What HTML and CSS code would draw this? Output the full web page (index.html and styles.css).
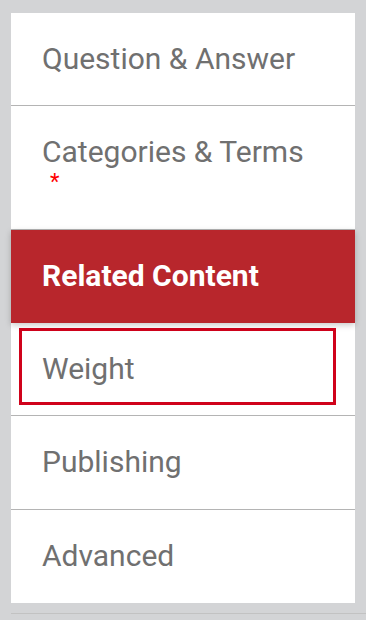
FILE: index.html
```html
<!DOCTYPE html>
<html lang="en">
<head>
<meta charset="utf-8">
<title>Sections</title>
<link rel="stylesheet" href="styles.css">
</head>
<body>
<nav class="panel">
  <div class="item">Question &amp; Answer</div>
  <div class="item">Categories &amp; Terms<span class="req">*</span></div>
  <div class="item active">Related Content</div>
  <div class="item focused">Weight</div>
  <div class="item tall">Publishing</div>
  <div class="item last">Advanced</div>
</nav>
<div class="next"></div>
</body>
</html>
```
FILE: styles.css
```css
html, body {
  margin: 0;
  padding: 0;
}
body {
  background: #d3d4d6;
  padding-top: 13px;
  font-family: Roboto, "Liberation Sans", Arial, sans-serif;
}
.panel {
  margin: 0 11px;
  background: #ffffff;
  display: flex;
  flex-direction: column;
}
.item {
  position: relative;
  padding: 28px 31px 28px;
  font-size: 30px;
  line-height: 36px;
  color: #707070;
  border-bottom: 1px solid #b4b4b4;
}
.item.tall {
  padding-bottom: 29px;
}
.item.last {
  border-bottom: none;
  padding-bottom: 29px;
}
.req {
  display: block;
  color: #ff0000;
  font-size: 22px;
  line-height: 31px;
  height: 31px;
  padding-left: 8px;
  position: relative;
  top: -4px;
}
.item.active {
  background: #b8262c;
  color: #ffffff;
  font-weight: 700;
  border-bottom: none;
  padding-bottom: 29px;
  box-shadow: 0 2px 6px rgba(0, 0, 0, 0.22);
  z-index: 1;
}
.item.focused::after {
  content: "";
  position: absolute;
  top: 5px;
  left: 8px;
  right: 19px;
  bottom: 10px;
  border: 3px solid #d0021b;
}
.next {
  margin: 10px 0 0 11px;
  border-top: 1px solid #c2c2c2;
}
```
